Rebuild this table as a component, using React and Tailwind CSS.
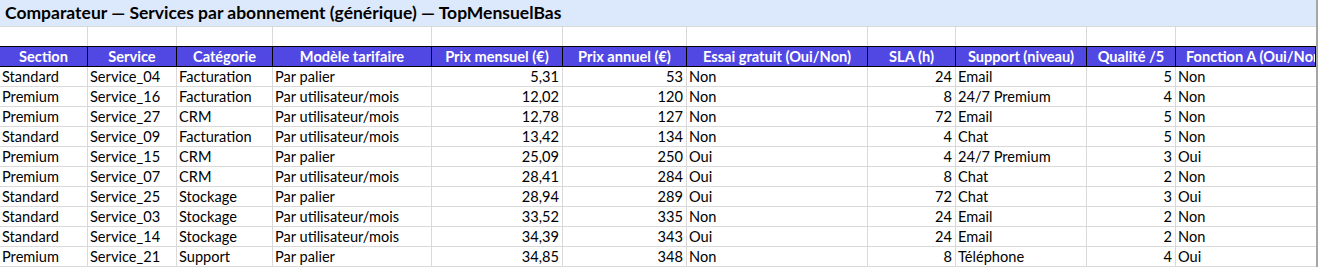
import React from "react";

const cols = [
  { label: "Section", w: "w-[88px]", align: "left" },
  { label: "Service", w: "w-[89px]", align: "left" },
  { label: "Catégorie", w: "w-[96px]", align: "left" },
  { label: "Modèle tarifaire", w: "w-[159px]", align: "left" },
  { label: "Prix mensuel (€)", w: "w-[131px]", align: "right" },
  { label: "Prix annuel (€)", w: "w-[124px]", align: "right" },
  { label: "Essai gratuit (Oui/Non)", w: "w-[181px]", align: "left" },
  { label: "SLA (h)", w: "w-[88px]", align: "right" },
  { label: "Support (niveau)", w: "w-[131px]", align: "left" },
  { label: "Qualité /5", w: "w-[89px]", align: "right" },
  { label: "Fonction A (Oui/Non)", w: "w-[160px]", align: "left" },
];

const rows = [
  ["Standard", "Service_04", "Facturation", "Par palier", "5,31", "53", "Non", "24", "Email", "5", "Non"],
  ["Premium", "Service_16", "Facturation", "Par utilisateur/mois", "12,02", "120", "Non", "8", "24/7 Premium", "4", "Non"],
  ["Premium", "Service_27", "CRM", "Par utilisateur/mois", "12,78", "127", "Non", "72", "Email", "5", "Non"],
  ["Standard", "Service_09", "Facturation", "Par utilisateur/mois", "13,42", "134", "Non", "4", "Chat", "5", "Non"],
  ["Premium", "Service_15", "CRM", "Par palier", "25,09", "250", "Oui", "4", "24/7 Premium", "3", "Oui"],
  ["Premium", "Service_07", "CRM", "Par utilisateur/mois", "28,41", "284", "Oui", "8", "Chat", "2", "Non"],
  ["Standard", "Service_25", "Stockage", "Par palier", "28,94", "289", "Oui", "72", "Chat", "3", "Oui"],
  ["Standard", "Service_03", "Stockage", "Par utilisateur/mois", "33,52", "335", "Non", "24", "Email", "2", "Non"],
  ["Standard", "Service_14", "Stockage", "Par utilisateur/mois", "34,39", "343", "Oui", "24", "Email", "2", "Non"],
  ["Premium", "Service_21", "Support", "Par palier", "34,85", "348", "Non", "8", "Téléphone", "4", "Oui"],
];

const App = () => {
  return (
    <div className="flex w-[1322px] h-[267px] overflow-hidden bg-white font-['Lato','Liberation_Sans',sans-serif] text-[14.6px] text-black">
      <div className="w-[1318px] shrink-0 overflow-hidden border-r-2 border-[#a6a6a6]">
        {/* title */}
        <div className="h-[27px] bg-[#dce8fb] pl-[5px] flex items-center border-b border-[#d9d9d9]">
          <span className="font-bold text-[17.5px] whitespace-nowrap">
            Comparateur — Services par abonnement (générique) — TopMensuelBas
          </span>
        </div>
        {/* empty row */}
        <div className="flex h-[19px] overflow-hidden">
          {cols.map((c, i) => (
            <div key={i} className={`${c.w} shrink-0 border-r border-[#d9d9d9]`} />
          ))}
        </div>
        {/* header */}
        <div className="flex h-[21px] bg-[#5148e4] border-y border-r border-black overflow-hidden">
          {cols.map((c, i) => (
            <div
              key={i}
              className={`${c.w} shrink-0 border-r border-black text-white font-bold text-center leading-[19px] whitespace-nowrap overflow-hidden`}
            >
              {c.label}
            </div>
          ))}
        </div>
        {rows.map((r, ri) => (
          <div key={ri} className="flex h-[20px] border-b border-[#d9d9d9] overflow-hidden">
            {r.map((v, ci) => (
              <div
                key={ci}
                className={`${cols[ci].w} shrink-0 border-r border-[#d9d9d9] leading-[19px] whitespace-nowrap overflow-hidden ${
                  cols[ci].align === "right" ? "text-right pr-[3px]" : "pl-[2px]"
                }`}
              >
                {v}
              </div>
            ))}
          </div>
        ))}
      </div>
    </div>
  );
};

export default App;
